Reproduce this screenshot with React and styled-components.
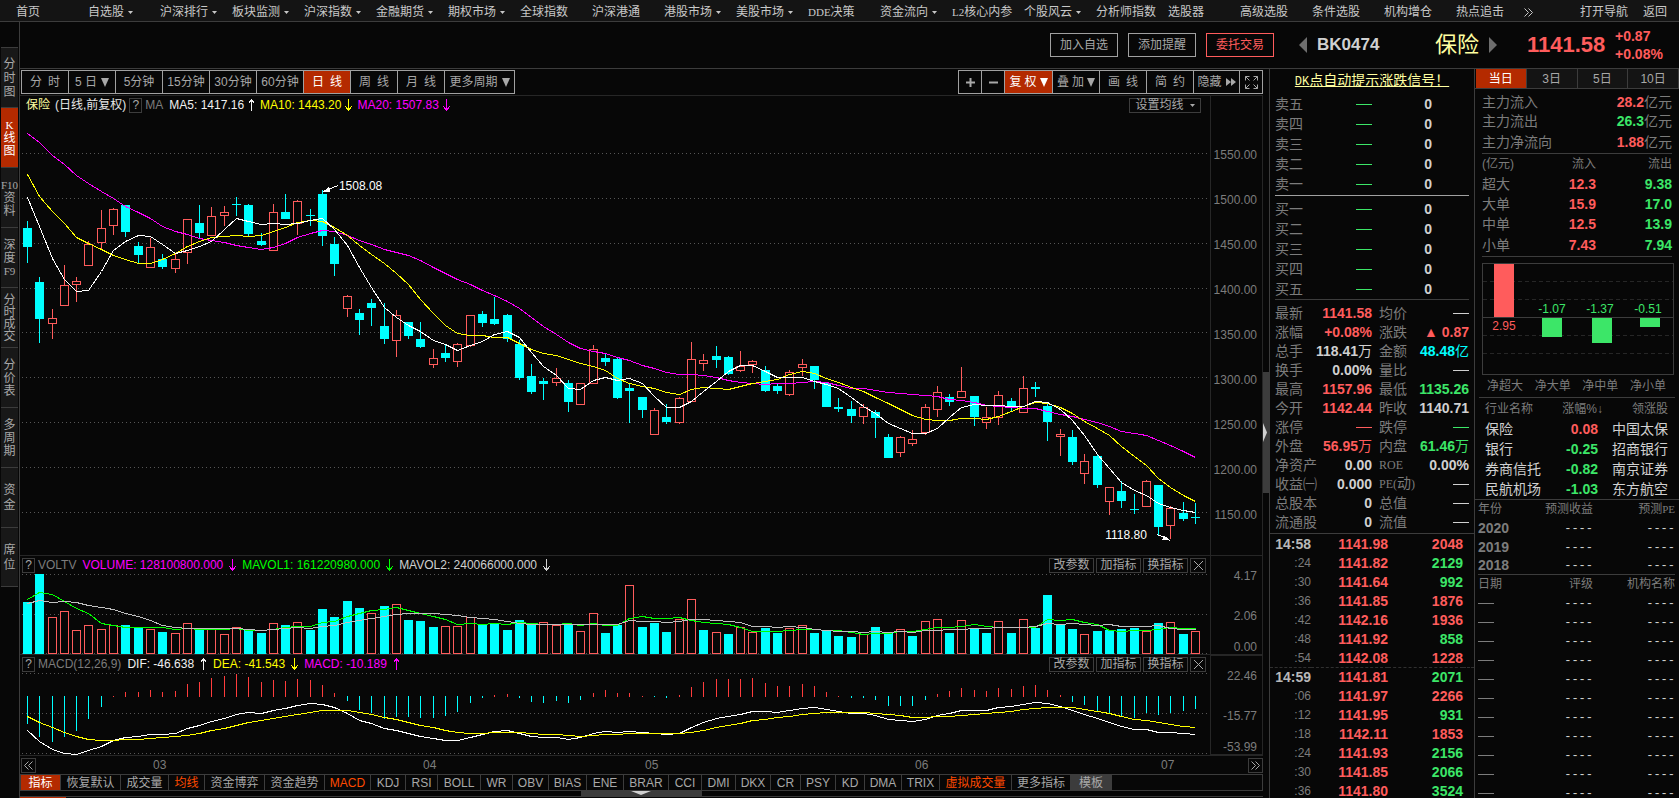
import React from "react";
import styled, { createGlobalStyle, css } from "styled-components";

const C = {
  bg: "#070707",
  bar: "#141414",
  line: "#3c3c3c",
  faint: "#262626",
  frame: "#a0a0a0",
  dim: "#7c7c7c",
  text: "#a8a8a8",
  bright: "#d0d0d0",
  accent: "#b42a00",
  orange: "#ff4a00",
  red: "#ff5c5c",
  green: "#3ce668",
  cyan: "#00ffff",
  yellow: "#ffff00",
  pale: "#ffffa0",
  magenta: "#ff00ff",
  lime: "#00ff00",
  white: "#ffffff",
};

const Global = createGlobalStyle`
  * { box-sizing: border-box; }
  body {
    margin: 0;
    background: ${C.bg};
    color: ${C.text};
    font-family: "Liberation Sans", "Noto Sans CJK SC", sans-serif;
    font-size: 12px;
    line-height: 14px;
  }
  button {
    margin: 0;
    padding: 0;
    border: 0;
    border-radius: 0;
    background: none;
    color: inherit;
    font: inherit;
    white-space: nowrap;
    cursor: pointer;
  }
  a { color: inherit; text-decoration: none; }
  svg { display: block; flex: none; }
`;

/* ---------- page frame ---------- */

const Page = styled.div`
  display: flex;
  flex-direction: column;
  height: 100vh;
  overflow: hidden;
`;
const Nav = styled.nav`
  display: flex;
  flex: none;
  height: 22px;
  padding: 0 12px 0 16px;
  background: ${C.bar};
  border-bottom: 1px solid ${C.line};
  color: #c8c8c8;
`;
const NavLink = styled.a`
  display: flex;
  align-items: center;
  gap: 4px;
  flex: 0 0 ${(p) => p.$w || 72}px;
  padding-top: 3px;
  white-space: nowrap;
`;
const NavEnd = styled.div`
  display: flex;
  gap: 15px;
  margin-left: auto;
`;
const Half = styled.span`
  font-family: "Liberation Mono", monospace;
  font-size: 12px;
`;
const Latin = styled.span`
  font-family: "Liberation Serif", serif;
  font-size: ${(p) => p.$size || 11}px;
`;
const Body = styled.div`
  display: flex;
  flex: 1;
  min-height: 0;
`;
const Side = styled.aside`
  flex: 0 0 20px;
  padding: 25px 1px 0 1px;
  border-right: 1px solid ${C.line};
`;
const SideTab = styled.button`
  display: flex;
  flex-direction: column;
  align-items: center;
  justify-content: center;
  gap: ${(p) => p.$gap}px;
  width: 17px;
  height: 60px;
  border-top: 1px solid ${C.line};
  background: ${(p) => (p.$on ? C.accent : "#181818")};
  color: ${(p) => (p.$on ? C.white : C.text)};
  line-height: 12px;
  &:last-child { border-bottom: 1px solid ${C.line}; }
`;
const Content = styled.div`
  display: flex;
  flex-direction: column;
  flex: 1;
  min-width: 0;
`;
const Head = styled.header`
  display: flex;
  align-items: center;
  justify-content: flex-end;
  flex: none;
  height: 47px;
  padding-right: 14px;
  border-bottom: 1px solid ${C.line};
`;
const HeadButton = styled.button`
  width: 68px;
  height: 24px;
  margin-right: 10px;
  border: 1px solid ${(p) => (p.$hot ? C.red : C.frame)};
  color: ${(p) => (p.$hot ? C.red : C.text)};
`;
const Pager = styled.div`
  display: flex;
  align-items: center;
  justify-content: space-between;
  width: 198px;
  margin: 0 30px 0 15px;
`;
const Code = styled.span`
  margin-left: 10px;
  margin-right: auto;
  color: ${C.bright};
  font-size: 17px;
  font-weight: bold;
`;
const StockName = styled.span`
  margin-right: 10px;
  color: ${C.pale};
  font-size: 22px;
  line-height: 24px;
`;
const Last = styled.strong`
  width: 80px;
  margin-right: 8px;
  color: ${C.red};
  font-size: 22px;
`;
const Change = styled.div`
  width: 50px;
  color: ${C.red};
  font-size: 14px;
  font-weight: bold;
  line-height: 18px;
`;
const Work = styled.div`
  display: flex;
  flex: 1;
  min-height: 0;
`;
const Center = styled.main`
  flex: 1;
  min-width: 0;
`;

/* ---------- toolbar ---------- */

const Toolbar = styled.div`
  display: flex;
  justify-content: space-between;
  height: 27px;
  padding: 1px 0 1px 1px;
  border-bottom: 1px solid ${C.faint};
`;
const ToolGroup = styled.div`
  display: flex;
  height: 24px;
  border: 1px solid ${C.frame};
`;
const Tool = styled.button`
  display: flex;
  align-items: center;
  justify-content: center;
  gap: ${(p) => p.$gap || 0}px;
  width: ${(p) => p.$w || 47}px;
  border-right: 1px solid ${C.frame};
  background: ${(p) => (p.$on ? C.accent : "none")};
  color: ${(p) => (p.$on ? C.white : C.text)};
  &:last-child { border-right: 0; }
`;

/* ---------- chart panels ---------- */

const Pane = styled.section`
  display: flex;
  border-bottom: 1px solid ${C.faint};
`;
const Plot = styled.div`
  position: relative;
  flex: 1;
  min-width: 0;
`;
const Canvas = styled.svg`
  width: 100%;
  height: ${(p) => p.$h}px;
`;
const Axis = styled.div`
  display: grid;
  flex: 0 0 53px;
  grid-template-rows: ${(p) => p.$rows};
  align-items: center;
  padding: ${(p) => p.$top || 0}px 5px 0 0;
  border: 1px solid ${C.faint};
  border-width: ${(p) => (p.$boxed ? "1px" : "0 1px")};
  color: ${C.dim};
  text-align: right;
  ${(p) => p.$low && css`& > :last-child { align-self: end; }`}
`;
const Legend = styled.div`
  display: flex;
  align-items: center;
  height: 17px;
  padding: 1px 3px 0 2px;
  white-space: nowrap;
`;
const Term = styled.span`
  display: flex;
  align-items: center;
  gap: ${(p) => (p.$tight ? 4 : 6)}px;
  margin-right: ${(p) => (p.$tight ? 5 : 6)}px;
  color: ${(p) => p.$c};
`;
const Muted = styled.span`
  margin: 0 6px 0 3px;
  color: ${C.dim};
`;
const SymbolName = styled.span`
  margin: 0 5px 0 4px;
  color: ${(p) => p.$c};
  & + & { margin: 0 3px 0 0; }
`;
const Small = styled.button`
  display: flex;
  align-items: center;
  justify-content: center;
  gap: 6px;
  width: ${(p) => p.$w}px;
  height: 15px;
  border: 1px solid ${C.line};
  color: ${C.text};
  line-height: 13px;
`;
const Tools = styled.div`
  display: flex;
  gap: 2px;
  margin: 0 ${(p) => p.$end || 1}px 0 auto;
`;
const Callout = styled.span`
  position: absolute;
  left: ${(p) => p.$left};
  top: ${(p) => p.$top};
  color: ${C.white};
`;
const Months = styled.div`
  display: flex;
  align-items: center;
  height: 18px;
  padding: 0 0 0 1px;
  color: ${C.dim};
`;
const Month = styled.span`
  flex: ${(p) => p.$f} 1 0;
  min-width: 0;
`;
const TabRow = styled.div`
  display: flex;
  height: 17px;
  border: 1px solid ${C.line};
  overflow: hidden;
`;
const Tab = styled.button`
  flex: 0 0 ${(p) => p.$w}px;
  padding-top: 1px;
  border-right: 1px solid ${C.line};
  background: ${(p) => p.$bg || "none"};
  color: ${(p) => p.$c || C.text};
  line-height: 14px;
`;
const DragRow = styled.div`
  display: flex;
  justify-content: center;
  height: 6px;
  padding-right: 1px;
  border-bottom: 1px solid ${C.line};
`;
const DragHandle = styled.div`
  display: flex;
  justify-content: center;
  width: 121px;
  background: ${C.line};
`;
const NextRow = styled.div`
  width: 46px;
  height: 8px;
  background: ${C.accent};
`;
const Splitter = styled.div`
  display: flex;
  align-items: center;
  flex: 0 0 7px;
  padding-bottom: 2px;
  border-right: 1px solid ${C.line};
`;
const SplitHandle = styled.div`
  display: flex;
  align-items: center;
  width: 6px;
  height: 121px;
  background: ${C.line};
`;

/* ---------- data columns ---------- */

const Column = styled.section`
  flex: 0 0 ${(p) => p.$w}px;
  overflow: hidden;
  border-right: ${(p) => (p.$edge ? "1px solid " + C.line : "0")};
`;
const Promo = styled.a`
  display: block;
  height: 25px;
  padding-top: 1px;
  color: ${C.pale};
  font-size: 14px;
  line-height: 20px;
  text-align: center;
  text-decoration: underline;
`;
const Table = styled.table`
  width: calc(100% - ${(p) => p.$inset || 0}px);
  margin: ${(p) => p.$m || "0"};
  padding-bottom: ${(p) => p.$pb || 0}px;
  border-collapse: separate;
  border-spacing: 0;
  table-layout: fixed;
  border-top: ${(p) => (p.$lead ? "1px solid " + p.$lead : "0")};
  border-bottom: ${(p) => (p.$rule ? "1px solid " + p.$rule : "0")};
`;
const Row = styled.tr`
  height: ${(p) => p.$h || 19}px;
  ${(p) => p.$dashed && css`& > td { border-top: 1px dashed #303030; }`}
`;
const Cell = styled.td`
  padding: 0 ${(p) => p.$pr || 0}px 0 0;
  width: ${(p) => (p.$w ? p.$w + "px" : "auto")};
  color: ${(p) => p.$c || C.dim};
  font-size: ${(p) => p.$size || 14}px;
  font-weight: ${(p) => (p.$b ? "bold" : "normal")};
  line-height: 16px;
  text-align: ${(p) => p.$a || "left"};
  white-space: nowrap;
`;
const HeadCell = styled(Cell).attrs({ as: "th", scope: "col" })`
  font-size: 12px;
`;
const LabelCell = styled(Cell).attrs({ as: "th", scope: "row" })``;
const Unit = styled.span`
  color: ${(p) => p.$c || "inherit"};
  font-weight: normal;
`;
const Dash = styled.span`
  display: inline-block;
  width: 16px;
  height: 1px;
  background: ${(p) => p.$c};
  vertical-align: 4px;
`;
const Blank = styled.span`
  font-family: "Liberation Mono", monospace;
  font-size: 12px;
  color: ${C.bright};
`;
const PeriodTabs = styled.div`
  display: flex;
  height: 20px;
  padding-left: 1px;
  border-bottom: 1px solid ${C.line};
`;
const PeriodTab = styled.button`
  flex: 1;
  border-right: 1px solid ${C.line};
  background: ${(p) => (p.$on ? C.accent : C.bar)};
  color: ${(p) => (p.$on ? C.white : C.text)};
`;
const FlowChart = styled.svg`
  width: 192px;
  height: 112px;
  margin: 6px 0 0 7px;
`;
const FlowLabels = styled.div`
  display: flex;
  justify-content: space-between;
  height: 23px;
  margin: 0 4px;
  padding: 4px 9px 0 8px;
  border-bottom: 1px solid ${C.line};
  color: ${C.dim};
`;

/* ---------- small drawings ---------- */

const Caret = ({ big }) =>
  big ? (
    <svg width="8" height="9" viewBox="0 0 8 9"><path d="M0 0h8L4 9z" fill="currentColor" /></svg>
  ) : (
    <svg width="5" height="3" viewBox="0 0 5 3"><path d="M0 0h5L2.5 3z" fill="currentColor" /></svg>
  );
const Arrow = ({ up }) => (
  <svg width="7" height="12" viewBox="0 0 7 12" fill="none" stroke="currentColor" shapeRendering="crispEdges">
    <path d={up ? "M3.5 12V1M.5 4.5l3-4 3 4" : "M3.5 0v11M.5 7.5l3 4 3-4"} />
  </svg>
);
const Chevrons = ({ left }) => (
  <svg width="9" height="9" viewBox="0 0 9 9" fill="none" stroke="currentColor">
    <path d={left ? "M4.5 .5l-4 4 4 4M8.5 .5l-4 4 4 4" : "M.5 .5l4 4-4 4M4.5 .5l4 4-4 4"} />
  </svg>
);
const Cross = () => (
  <svg width="11" height="11" viewBox="0 0 11 11" fill="none" stroke="currentColor"><path d="M1 1l9 9M10 1l-9 9" /></svg>
);
const Triangle = ({ left }) => (
  <svg width="8" height="16" viewBox="0 0 8 16"><path d={left ? "M8 0v16L0 8z" : "M0 0v16l8-8z"} fill="#6e6e6e" /></svg>
);
const Plus = ({ minus }) => (
  <svg width="9" height="9" viewBox="0 0 9 9" fill="currentColor">
    <path d={minus ? "M0 3.5h9v2H0z" : "M0 3.5h3.5V0h2v3.500h3.500v2H5.500V9h-2V5.500H0z"} />
  </svg>
);
const Forward = () => (
  <svg width="10" height="8" viewBox="0 0 10 8" fill="currentColor"><path d="M0 0l5 4-5 4zM5 0l5 4-5 4z" /></svg>
);
const Expand = () => (
  <svg width="13" height="13" viewBox="0 0 13 13" fill="none" stroke="currentColor">
    <path d="M4.500 .5h-4v4M.5 .5l4 4M8.500 .5h4v4M12.500 .5l-4 4M4.500 12.500h-4v-4M.5 12.500l4-4M8.500 12.500h4v-4M12.500 12.500l-4-4" />
  </svg>
);

/* ---------- series ---------- */

const px = (i) => Math.round(27 + 12.295 * i);
const nums = (s) => s.trim().split(/\s+/).map(Number);

const CANDLES = `c221,228,247,263 c277,282,319,343 r309,318,323,339 r265,285,305,305 r277,281,284,302 r241,244,265,265 r210,228,242,249 r208,209,225,235
c205,205,232,237 c242,246,255,263 r238,247,267,268 c254,259,267,269 r254,259,268,273 r219,219,252,264 c205,223,233,239 r207,216,235,235
r206,212,215,226 c197,204,205,216 c204,205,234,236 c233,241,245,246 r204,212,250,250 c194,212,219,219 r200,201,223,235 c209,215,216,226
c190,194,236,246 c237,244,264,276 r295,296,308,317 c309,313,320,335 c299,303,308,326 c303,326,339,344 r310,315,340,357 c322,322,336,339
c322,339,347,348 r349,358,364,368 c345,353,358,362 r343,344,361,367 r315,315,345,347 c311,314,323,327 c297,319,324,325 c314,315,339,342
c340,344,378,380 c364,376,392,394 c378,381,384,400 r368,378,382,386 c380,383,402,412 r383,383,404,404 r345,349,383,383 c354,358,362,366
c357,359,398,399 c383,388,391,423 c397,397,410,418 r408,410,434,435 c404,417,422,424 r397,398,422,424 r342,359,401,401 r354,360,363,371
c346,356,360,368 c356,357,374,375 r351,366,370,372 r360,361,364,373 c366,370,391,392 c383,386,391,394 r370,372,394,396 r359,364,367,376
c366,366,380,389 c383,383,407,407 c398,407,409,412 c401,409,416,423 r404,407,416,424 c410,412,418,438 c434,437,458,458 r436,437,452,457
r430,439,443,446 r404,407,432,435 r386,392,409,417 c394,397,402,406 r367,391,397,397 c396,396,417,426 r407,417,422,429 r391,395,417,425
c398,401,406,411 r376,388,412,412 c382,387,389,397 c404,406,422,441 r429,434,436,456 c430,437,462,465 r454,461,473,484 c454,456,485,488
r487,487,501,515 c481,491,501,508 c494,509,510,514 r480,481,506,506 c485,485,527,535 r506,508,525,539 c502,513,519,521 c503,517,518,524`
  .split(/\s+/)
  .map((s) => [s[0], ...s.slice(1).split(",").map(Number)]);

const MA5 = nums(`197 226 258 279 291 290 271 250 241 235 236 244 253 250 246 241 229 218 221 224 223 224 223 220 218 229 245 267 287 307
317 325 331 340 344 350 345 341 334 331 337 352 366 375 388 389 380 377 380 378 383 396 407 407 401 391 381 371 365 365
371 377 377 377 381 384 388 397 406 413 423 428 433 433 428 417 407 404 405 405 406 406 401 402 409 420 435 454 468 482
490 495 503 507 510 512`);
const MA10 = nums(`174 196 211 223 237 243 249 255 259 263 263 259 253 246 241 237 236 235 236 235 231 227 222 220 221 227 235 245 254 263
273 284 299 313 325 333 335 335 337 337 343 349 353 355 359 363 366 370 378 383 386 388 392 394 389 387 388 389 386 383
381 379 374 371 373 378 382 387 391 397 403 409 415 419 420 420 418 418 419 416 411 406 402 403 407 413 421 428 435 446
456 465 478 487 495 501`);
const MA20 = nums(`133 142 155 164 175 183 191 198 206 212 218 226 231 234 238 240 242 245 247 249 247 243 237 233 230 231 235 240 244 249
252 255 260 267 273 279 284 290 295 301 308 317 326 334 342 348 351 353 357 360 365 368 372 374 374 375 377 380 382 383
384 383 383 382 381 382 385 388 388 390 392 393 394 395 396 399 400 402 405 406 407 408 408 411 414 416 419 422 426 431
433 435 440 445 451 457`);
const VOLUME = `c602 c574 r617 r611 r630 r625 r629 r625 c625 c627 r629 c632 r633 r623 c628 r629 r634 r627 c629 c633 r623 c625 r622 c630
c609 c617 c601 c608 r613 c606 r604 c620 c621 c627 r626 r626 r617 c625 c623 c630 c620 c623 r622 r625 c624 r631 r613 c633 c625 r585
c627 c623 c632 r619 r599 c630 r632 c634 r627 r632 c628 c633 r628 r625 c633 c631 c636 c637 r634 c627 c633 r629 c636 r621 r619
c633 r620 c629 c633 r621 c633 r619 c628 c595 c625 c629 r634 c631 c630 c629 c628 r631 c623 r622 c634 r631`.split(/\s+/);
const VOL1 = nums(`599 592 594 601 608 613 623 625 627 627 627 627 629 628 629 629 629 628 630 630 629 627 626 626 622 621 616 613 610 609
607 610 613 616 619 624 623 624 623 624 622 623 624 624 623 625 623 625 625 618 616 618 618 617 620 622 623 624 627 631
631 631 630 629 629 630 630 632 634 633 633 631 631 629 627 627 626 624 626 627 627 627 627 619 620 619 622 624 630 631
630 630 629 627 628 628`);
const VOL2 = nums(`603 600 602 601 602 605 607 609 613 616 620 625 627 628 628 628 628 628 629 630 629 628 627 628 626 625 622 620 618 616
614 613 613 613 614 615 617 618 619 621 623 624 624 624 624 624 624 624 624 620 621 621 622 621 619 619 620 621 622 626
626 627 626 627 629 630 631 631 632 631 632 631 632 630 630 629 629 628 628 627 627 627 626 623 624 623 624 625 624 626
626 626 625 628 629 629`);
const HIST = nums(`724 737 742 737 731 719 707 696 692 692 690 692 691 684 682 678 676 674 677 682 680 681 679 680 685 693 701 710 713 719
717 717 718 718 716 712 703 698 695 694 698 702 703 701 703 700 693 690 693 693 696 697 698 695 687 682 679 679 679 678
683 686 686 684 686 692 696 698 698 700 706 706 706 700 694 691 688 690 691 688 689 686 685 690 695 702 705 711 714 716
718 713 715 713 711 709`);
const DIF = nums(`730 741 749 753 754 750 746 740 737 736 734 734 733 728 725 721 718 714 712 713 710 708 705 703 704 707 713 720 723 728
730 733 736 738 740 740 737 734 731 730 733 736 737 737 739 737 733 731 732 731 732 733 734 733 727 722 718 716 714 711
711 712 710 708 707 709 711 713 713 715 719 720 721 719 715 713 710 710 710 707 706 704 702 703 706 710 714 718 722 726
729 729 732 732 733 734`);
const DEA = nums(`716 722 727 732 736 739 740 740 739 739 738 737 736 735 733 730 728 725 722 720 718 716 714 712 710 710 710 712 714 717
719 722 725 727 730 732 733 733 732 732 732 733 734 734 735 736 735 734 734 733 733 733 733 733 732 730 727 725 723 720
719 717 716 714 713 712 712 712 712 713 714 715 717 717 716 716 715 714 713 712 711 709 708 707 707 707 709 711 713 716
719 720 722 724 726 727`);

const Line = ({ data, color }) => (
  <polyline fill="none" stroke={color} points={data.map((y, i) => `${px(i) + 0.5},${y + 0.5}`).join(" ")} />
);
const Grid = ({ rows }) => (
  <g stroke="#565656" strokeDasharray="1 3">
    {rows.map((y) => <path key={y} d={`M22 ${y}.5H1208`} />)}
  </g>
);
const Bar = ({ kind, x, top, bottom }) =>
  kind === "c" ? (
    <rect x={x - 4} y={top} width="9" height={Math.max(1, bottom - top)} fill={C.cyan} />
  ) : (
    <rect x={x - 3.5} y={top + 0.5} width="8" height={Math.max(1, bottom - top)} fill={C.bg} stroke={C.red} />
  );
const Chart = ({ top, height, label, children }) => (
  <Canvas
    $h={height}
    viewBox={`20 ${top} 1190 ${height}`}
    preserveAspectRatio="none"
    shapeRendering="crispEdges"
    role="img"
    aria-label={label}
  >
    {children}
  </Canvas>
);

const PaneTools = () => (
  <Tools>
    <Small $w={45}>改参数</Small>
    <Small $w={45}>加指标</Small>
    <Small $w={45}>换指标</Small>
    <Small $w={16} aria-label="关闭"><Cross /></Small>
  </Tools>
);

/* ---------- content ---------- */

const NAV = [
  ["首页"], ["自选股", 1], ["沪深排行", 1], ["板块监测", 1], ["沪深指数", 1], ["金融期货", 1], ["期权市场", 1],
  ["全球指数"], ["沪深港通"], ["港股市场", 1], ["美股市场", 1], ["决策", 0, "DDE"], ["资金流向", 1],
  ["核心内参", 0, "L2"], ["个股风云", 1], ["分析师指数"], ["选股器"], ["高级选股"], ["条件选股"], ["机构增仓"],
  ["热点追击", 0, "", 68],
];
const SIDE = [
  [["分", "时", "图"], 2], [["K", "线", "图"], 1, true], [["F10", "资", "料"], 1], [["深", "度", "F9"], 1],
  [["分", "时", "成", "交"], 0], [["分", "价", "表"], 1], [["多", "周", "期"], 1], [["资", "金"], 3], [["席", "位"], 3],
];
const TABS = [
  ["指标", 40, C.white, C.accent], ["恢复默认", 60], ["成交量", 48], ["均线", 36, C.orange], ["资金博弈", 60], ["资金趋势", 60],
  ["MACD", 46, C.orange], ["KDJ", 35], ["RSI", 32], ["BOLL", 43], ["WR", 32], ["OBV", 36], ["BIAS", 38], ["ENE", 37],
  ["BRAR", 45], ["CCI", 33], ["DMI", 34], ["DKX", 35], ["CR", 30], ["PSY", 35], ["KD", 29], ["DMA", 37], ["TRIX", 38],
  ["虚拟成交量", 72, C.orange], ["更多指标", 59], ["模板", 41, C.text, C.line],
];
const ASKS = ["卖五", "卖四", "卖三", "卖二", "卖一"];
const BIDS = ["买一", "买二", "买三", "买四", "买五"];
const QUOTE = [
  ["最新", "1141.58", C.red, "", "均价", null, C.bright],
  ["涨幅", "+0.08%", C.red, "", "涨跌", "▲ 0.87", C.red],
  ["总手", "118.41", C.bright, "万", "金额", "48.48", C.cyan, "亿"],
  ["换手", "0.00%", C.bright, "", "量比", null, C.bright],
  ["最高", "1157.96", C.red, "", "最低", "1135.26", C.green],
  ["今开", "1142.44", C.red, "", "昨收", "1140.71", C.bright],
  ["涨停", null, C.red, "", "跌停", null, C.green],
  ["外盘", "56.95", C.red, "万", "内盘", "61.46", C.green, "万"],
  ["净资产", "0.00", C.bright, "", <Latin $size={12}>ROE</Latin>, "0.00%", C.bright],
  ["收益㈠", "0.000", C.bright, "", <><Latin $size={12}>PE(</Latin>动<Latin $size={12}>)</Latin></>, null, C.bright],
  ["总股本", "0", C.bright, "", "总值", null, C.bright],
  ["流通股", "0", C.bright, "", "流值", null, C.bright],
];
const TICKS = [
  ["14:58", "1141.98", "2048", 1], [":24", "1141.82", "2129", 0], [":30", "1141.64", "992", 0], [":36", "1141.85", "1876", 1],
  [":42", "1142.16", "1936", 1], [":48", "1141.92", "858", 0], [":54", "1142.08", "1228", 1], ["14:59", "1141.81", "2071", 0],
  [":06", "1141.97", "2266", 1], [":12", "1141.95", "931", 0], [":18", "1142.11", "1853", 1], [":24", "1141.93", "2156", 0],
  [":30", "1141.85", "2066", 0], [":36", "1141.80", "3524", 0],
];
const FLOW = [["超大", "12.3", "9.38"], ["大单", "15.9", "17.0"], ["中单", "12.5", "13.9"], ["小单", "7.43", "7.94"]];
const SECTORS = [
  ["保险", "0.08", "中国太保", C.red], ["银行", "-0.25", "招商银行", C.green],
  ["券商信托", "-0.82", "南京证券", C.green], ["民航机场", "-1.03", "东方航空", C.green],
];

const Book = ({ rows, ...rest }) => (
  <Table $inset={10} {...rest}>
    <tbody>
      {rows.map((r) => (
        <Row key={r} $h={20}>
          <LabelCell $w={60}>{r}</LabelCell>
          <Cell $w={37} $a="right"><Dash $c={C.green} /></Cell>
          <Cell $w={60} $a="right" $b $c={C.bright}>0</Cell>
          <Cell />
        </Row>
      ))}
    </tbody>
  </Table>
);
const Value = ({ v, c, unit }) => (v === null ? <Dash $c={c} /> : <>{v}{unit && <Unit>{unit}</Unit>}</>);

export default function App() {
  return (
    <Page>
      <Global />
      <Nav>
        {NAV.map(([t, menu, latin, w]) => (
          <NavLink key={t} href="#" $w={w}>
            <span>{latin && <Latin>{latin}</Latin>}{t}</span>
            {menu ? <Caret /> : null}
          </NavLink>
        ))}
        <NavEnd>
          <NavLink as="button" $w={41} aria-label="更多"><Chevrons /></NavLink>
          <NavLink href="#" $w={48}>打开导航</NavLink>
          <NavLink href="#" $w={24}>返回</NavLink>
        </NavEnd>
      </Nav>

      <Body>
        <Side>
          {SIDE.map(([chars, gap, on]) => (
            <SideTab key={chars.join("")} $gap={gap} $on={on}>
              {chars.map((c) => (c.charCodeAt(0) < 128 ? <Latin key={c}>{c}</Latin> : <span key={c}>{c}</span>))}
            </SideTab>
          ))}
        </Side>

        <Content>
          <Head>
            <HeadButton>加入自选</HeadButton>
            <HeadButton>添加提醒</HeadButton>
            <HeadButton $hot>委托交易</HeadButton>
            <Pager>
              <button aria-label="上一个"><Triangle left /></button>
              <Code>BK0474</Code>
              <StockName>保险</StockName>
              <button aria-label="下一个"><Triangle /></button>
            </Pager>
            <Last>1141.58</Last>
            <Change>
              <div>+0.87</div>
              <div>+0.08%</div>
            </Change>
          </Head>

          <Work>
            <Center>
              <Toolbar>
                <ToolGroup>
                  <Tool $gap={6}><span>分</span><span>时</span></Tool>
                  <Tool $gap={4}>5 日<Caret big /></Tool>
                  <Tool>5分钟</Tool>
                  <Tool>15分钟</Tool>
                  <Tool>30分钟</Tool>
                  <Tool>60分钟</Tool>
                  <Tool $on $gap={6}><span>日</span><span>线</span></Tool>
                  <Tool $gap={6}><span>周</span><span>线</span></Tool>
                  <Tool $gap={6}><span>月</span><span>线</span></Tool>
                  <Tool $w={69} $gap={4}>更多周期<Caret big /></Tool>
                </ToolGroup>
                <ToolGroup>
                  <Tool $w={23} aria-label="放大"><Plus /></Tool>
                  <Tool $w={23} aria-label="缩小"><Plus minus /></Tool>
                  <Tool $on $w={48} $gap={3}><span>复</span><span>权</span><Caret big /></Tool>
                  <Tool $gap={3}><span>叠</span><span>加</span><Caret big /></Tool>
                  <Tool $gap={6}><span>画</span><span>线</span></Tool>
                  <Tool $gap={6}><span>简</span><span>约</span></Tool>
                  <Tool $w={46} $gap={4}>隐藏<Forward /></Tool>
                  <Tool $w={22} aria-label="全屏"><Expand /></Tool>
                </ToolGroup>
              </Toolbar>

              <Pane>
                <Plot>
                  <Legend>
                    <SymbolName $c={C.pale}>保险</SymbolName>
                    <SymbolName $c="#e8e8e8">(日线,前复权)</SymbolName>
                    <Small $w={13}>?</Small>
                    <Muted>MA</Muted>
                    <Term $tight $c="#f0f0f0">MA5: 1417.16<Arrow up /></Term>
                    <Term $tight $c={C.yellow}>MA10: 1443.20<Arrow /></Term>
                    <Term $tight $c={C.magenta}>MA20: 1507.83<Arrow /></Term>
                    <Tools $end={6}>
                      <Small $w={72}>设置均线<Caret /></Small>
                    </Tools>
                  </Legend>
                  <Chart top={113} height={442} label="日线">
                    <Grid rows={[153, 198, 243, 288, 332, 377, 422, 467, 512]} />
                    {CANDLES.map(([k, hi, top, bottom, lo], i) => (
                      <g key={i}>
                        <rect x={px(i)} y={hi} width="1" height={lo - hi} fill={k === "c" ? C.cyan : C.red} />
                        <Bar kind={k} x={px(i)} top={top} bottom={bottom} />
                      </g>
                    ))}
                    <Line data={MA20} color={C.magenta} />
                    <Line data={MA10} color={C.yellow} />
                    <Line data={MA5} color={C.white} />
                    <g fill={C.white} stroke={C.white}>
                      <path d="M325.5 190.500L338 185.500" />
                      <path d="M324.500 191l4-3 1 3z" />
                      <path d="M1157 534.500l11 4" />
                      <path d="M1169 540l-6-.5 1.500-3z" />
                    </g>
                  </Chart>
                  <Callout $left="26.8%" $top="83px">1508.08</Callout>
                  <Callout $left="91.2%" $top="432px">1118.80</Callout>
                </Plot>
                <Axis $rows="repeat(9, 45px)" $top={36}>
                  {["1550.00", "1500.00", "1450.00", "1400.00", "1350.00", "1300.00", "1250.00", "1200.00", "1150.00"].map((t) => (
                    <span key={t}>{t}</span>
                  ))}
                </Axis>
              </Pane>

              <Pane>
                <Plot>
                  <Legend>
                    <Small $w={13}>?</Small>
                    <Muted>VOLTV</Muted>
                    <Term $c={C.magenta}>VOLUME: 128100800.000<Arrow /></Term>
                    <Term $c={C.lime}>MAVOL1: 161220980.000<Arrow /></Term>
                    <Term $c={C.bright}>MAVOL2: 240066000.000<Arrow /></Term>
                    <PaneTools />
                  </Legend>
                  <Chart top={573} height={81} label="成交量">
                    <Grid rows={[574, 614, 653]} />
                    {VOLUME.map((v, i) => (
                      <Bar key={i} kind={v[0]} x={px(i)} top={Number(v.slice(1))} bottom={v[0] === "c" ? 654 : 653} />
                    ))}
                    <Line data={VOL1} color={C.lime} />
                    <Line data={VOL2} color="#c0c0c0" />
                  </Chart>
                </Plot>
                <Axis $rows="40px 40px 1fr" $low>
                  <span>4.17</span>
                  <span>2.06</span>
                  <span>0.00</span>
                </Axis>
              </Pane>

              <Pane>
                <Plot>
                  <Legend>
                    <Small $w={13}>?</Small>
                    <Muted>MACD(12,26,9)</Muted>
                    <Term $c="#f0f0f0">DIF: -46.638<Arrow up /></Term>
                    <Term $c={C.yellow}>DEA: -41.543<Arrow /></Term>
                    <Term $c={C.magenta}>MACD: -10.189<Arrow up /></Term>
                    <PaneTools />
                  </Legend>
                  <Chart top={672} height={83} label="MACD">
                    <Grid rows={[673, 713, 753]} />
                    {HIST.map((y, i) => (
                      <rect
                        key={i}
                        x={px(i)}
                        y={y > 696 ? 696 : y}
                        width="1"
                        height={y > 696 ? y - 696 : 697 - y}
                        fill={y > 696 ? C.cyan : "#ff3c3c"}
                      />
                    ))}
                    <Line data={DIF} color={C.white} />
                    <Line data={DEA} color={C.yellow} />
                  </Chart>
                </Plot>
                <Axis $rows="40px 40px 1fr" $boxed $low>
                  <span>22.46</span>
                  <span>-15.77</span>
                  <span>-53.99</span>
                </Axis>
              </Pane>

              <Months>
                <Small $w={15} aria-label="向左"><Chevrons left /></Small>
                <Month $f={117} />
                <Month $f={270}>03</Month>
                <Month $f={222}>04</Month>
                <Month $f={270}>05</Month>
                <Month $f={246}>06</Month>
                <Month $f={87}>07</Month>
                <Small $w={15} aria-label="向右"><Chevrons /></Small>
              </Months>
              <TabRow>
                {TABS.map(([t, w, c, bg]) => (
                  <Tab key={t} $w={w} $c={c} $bg={bg}>{t}</Tab>
                ))}
              </TabRow>
              <DragRow>
                <DragHandle>
                  <svg width="20" height="4" viewBox="0 0 20 4"><path d="M0 0h20L10 4z" fill={C.bright} /></svg>
                </DragHandle>
              </DragRow>
              <NextRow />
            </Center>

            <Splitter>
              <SplitHandle>
                <svg width="4" height="19" viewBox="0 0 4 19"><path d="M0 0l4 9.500L0 19z" fill={C.bright} /></svg>
              </SplitHandle>
            </Splitter>

            <Column $w={205} $edge>
              <Promo href="#"><Half>DK</Half>点自动提示涨跌信号！</Promo>
              <Book rows={ASKS} $rule={C.frame} $m="0 5px" $pb={1} />
              <Book rows={BIDS} $rule={C.line} $m="3px 5px 0" />
              <Table $inset={10} $m="3px 5px 0">
                <tbody>
                  {QUOTE.map(([a, v, c, u, b, w, d, x], i) => (
                    <Row key={i}>
                      <LabelCell $w={40}>{a}</LabelCell>
                      <Cell $w={57} $a="right" $b $c={c}><Value v={v} c={c} unit={u} /></Cell>
                      <Cell $w={7} />
                      <LabelCell $w={38}>{b}</LabelCell>
                      <Cell $w={52} $a="right" $b $c={d}><Value v={w} c={d} unit={x} /></Cell>
                    </Row>
                  ))}
                </tbody>
              </Table>
              <Table $m="2px 0 0" $lead={C.line}>
                <tbody>
                  {TICKS.map(([t, p, v, up], i) => {
                    const full = t.length > 3;
                    return (
                      <Row key={i} $dashed={i === 7}>
                        <Cell $w={41} $a="right" $b={full} $c={full ? "#b8b8b8" : C.dim} $size={full ? 14 : 12}>{t}</Cell>
                        <Cell $w={77} $a="right" $b $c={C.red}>{p}</Cell>
                        <Cell $w={75} $a="right" $b $c={up ? C.red : C.green}>{v}</Cell>
                        <Cell />
                      </Row>
                    );
                  })}
                </tbody>
              </Table>
            </Column>

            <Column $w={204}>
              <PeriodTabs>
                <PeriodTab $on>当日</PeriodTab>
                <PeriodTab>3日</PeriodTab>
                <PeriodTab>5日</PeriodTab>
                <PeriodTab>10日</PeriodTab>
              </PeriodTabs>
              <Table $inset={14} $m="3px 7px 0" $rule={C.line}>
                <tbody>
                  {[["主力流入", "28.2", C.red, 19], ["主力流出", "26.3", C.green, 19], ["主力净流向", "1.88", C.red, 23]].map(([l, v, c, h]) => (
                    <Row key={l} $h={h}>
                      <LabelCell $w={100}>{l}</LabelCell>
                      <Cell $a="right" $b $c={c}>{v}<Unit $c={C.dim}>亿元</Unit></Cell>
                    </Row>
                  ))}
                </tbody>
              </Table>
              <Table $inset={14} $m="0 7px" $rule={C.line} $pb={1}>
                <thead>
                  <Row $h={20}>
                    <HeadCell $w={60}>(亿元)</HeadCell>
                    <HeadCell $w={54} $a="right">流入</HeadCell>
                    <HeadCell $a="right">流出</HeadCell>
                  </Row>
                </thead>
                <tbody>
                  {FLOW.map(([l, a, b], i) => (
                    <Row key={l} $h={i === 3 ? 21 : 20}>
                      <LabelCell>{l}</LabelCell>
                      <Cell $a="right" $b $c={C.red}>{a}</Cell>
                      <Cell $a="right" $b $c={C.green}>{b}</Cell>
                    </Row>
                  ))}
                </tbody>
              </Table>
              <FlowChart viewBox="0 0 192 112" shapeRendering="crispEdges" role="img" aria-label="资金净流入">
                <g stroke={C.faint} strokeDasharray="4 3">
                  <path d="M1 18.5h190M1 36.5h190M1 72.5h190M1 90.500h190" />
                </g>
                <path d="M.5 .5h191v111H.5zM0 54.500h192" fill="none" stroke={C.line} />
                <rect x="12" y="1" width="20" height="53" fill={C.red} />
                <rect x="60" y="55" width="20" height="19" fill={C.green} />
                <rect x="110" y="55" width="20" height="25" fill={C.green} />
                <rect x="158" y="55" width="20" height="9" fill={C.green} />
                <g fontSize="12" textAnchor="middle" fill={C.green}>
                  <text x="22" y="67" fill={C.red}>2.95</text>
                  <text x="70" y="50">-1.07</text>
                  <text x="118" y="50">-1.37</text>
                  <text x="166" y="50">-0.51</text>
                </g>
              </FlowChart>
              <FlowLabels>
                <span>净超大</span>
                <span>净大单</span>
                <span>净中单</span>
                <span>净小单</span>
              </FlowLabels>
              <Table $rule={C.line}>
                <thead>
                  <Row $h={21}>
                    <Cell as="td" $w={10} />
                    <HeadCell $w={60}>行业名称</HeadCell>
                    <HeadCell $w={58} $a="right">涨幅%↓</HeadCell>
                    <HeadCell $w={65} $a="right">领涨股</HeadCell>
                    <Cell as="td" />
                  </Row>
                </thead>
                <tbody>
                  {SECTORS.map(([a, v, b, c]) => (
                    <Row key={a} $h={20}>
                      <Cell />
                      <LabelCell $c={C.bright}>{a}</LabelCell>
                      <Cell $a="right" $b $c={c} $pr={5}>{v}</Cell>
                      <Cell $a="right" $c={C.bright}>{b}</Cell>
                      <Cell />
                    </Row>
                  ))}
                </tbody>
              </Table>
              <Table $inset={7} $m="0 4px 0 3px" $rule={C.line}>
                <thead>
                  <Row $h={18}>
                    <HeadCell $w={40}>年份</HeadCell>
                    <HeadCell $w={75} $a="right">预测收益</HeadCell>
                    <HeadCell $a="right">预测<Latin>PE</Latin></HeadCell>
                  </Row>
                </thead>
                <tbody>
                  {["2020", "2019", "2018"].map((y) => (
                    <Row key={y} $h={y === "2018" ? 18 : 19}>
                      <LabelCell $b>{y}</LabelCell>
                      <Cell $a="right"><Blank>----</Blank></Cell>
                      <Cell $a="right"><Blank>----</Blank></Cell>
                    </Row>
                  ))}
                </tbody>
              </Table>
              <Table $inset={7} $m="0 4px 0 3px">
                <thead>
                  <Row $h={18}>
                    <HeadCell $w={40}>日期</HeadCell>
                    <HeadCell $w={75} $a="right">评级</HeadCell>
                    <HeadCell $a="right">机构名称</HeadCell>
                  </Row>
                </thead>
                <tbody>
                  {Array.from({ length: 11 }, (_, i) => (
                    <Row key={i}>
                      <Cell><Dash $c={C.dim} /></Cell>
                      <Cell $a="right"><Blank>----</Blank></Cell>
                      <Cell $a="right"><Blank>----</Blank></Cell>
                    </Row>
                  ))}
                </tbody>
              </Table>
            </Column>
          </Work>
        </Content>
      </Body>
    </Page>
  );
}
